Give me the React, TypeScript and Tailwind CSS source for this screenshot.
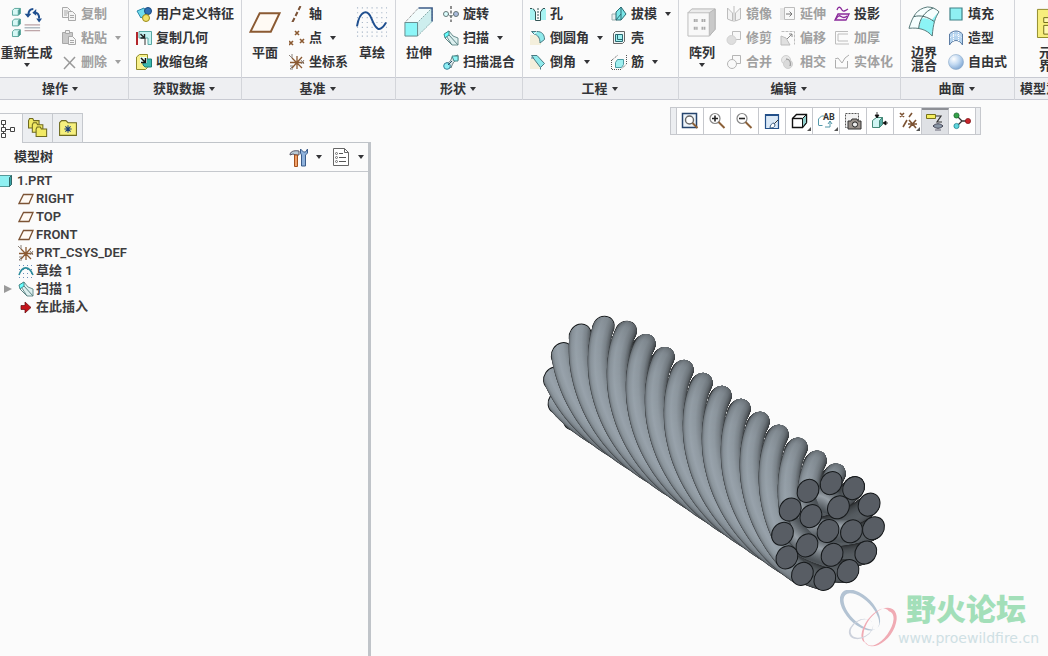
import React from 'react';
import clsx from 'clsx';

const ICONS: Record<string, React.ReactNode> = {
  regenerate: (
    <>
      {[2, 13, 24].map((y) => (
        <g key={y} stroke="#5aa59c" strokeWidth="1">
          <path d={`M1.5 ${y + 2.5}l2-2h6v5l-2 2h-6z`} fill="#d6f8f5" />
          <path d={`M7.5 ${y + 2.5}l2-2v5l-2 2z`} fill="#3f8f86" />
        </g>
      ))}
      <path d="M23 3c-4 0-5 3-5 6M25 7c3 0 4 3 4 6" fill="none" stroke="#1f4f8f" strokeWidth="2" />
      <path d="M14 8h7l-3.500 4zM22 7l4-4v7zM26 13h6l-3 4z" fill="#1f4f8f" />
      <path d="M14 19.500h16M14 25.500h16" stroke="#a98a8e" />
      <path d="M14 22.500h16" stroke="#8a9aa6" />
    </>
  ),
  copy: (
    <g fill="#f4f4f4" stroke="#a9a9a9">
      <path d="M1.500 1.500h5l3 3v7h-8z" />
      <path d="M3 5h4M3 7h4M3 9h3" />
      <path d="M7.500 5.500h4l3 3v6h-7z" />
      <path d="M9 9.500h4M9 11.500h4" />
    </g>
  ),
  paste: (
    <g stroke="#a8a8a8">
      <path d="M1.500 2.500h10v11h-10z" fill="#c9c9c9" />
      <path d="M4.500 .5h4v3h-4z" fill="#eee" />
      <path d="M7.500 6.500h4l3 3v5h-7z" fill="#f6f6f6" />
      <path d="M9 10.500h4M9 12.500h4" />
    </g>
  ),
  remove: <path d="M3 3l11 11M14 3L3 15" fill="none" stroke="#999" strokeWidth="1.500" />,
  udf: (
    <>
      <path d="M1 5l7-3 3 5-6 5z" fill="#6fdcec" stroke="#2b86a8" />
      <circle cx="12" cy="5" r="3.500" fill="#2f6fb4" stroke="#184a80" />
      <circle cx="10" cy="12" r="3.500" fill="#f1e26a" stroke="#9a8a1a" />
    </>
  ),
  copygeom: (
    <>
      <path d="M1 2v13" stroke="#b3262b" strokeWidth="2" />
      <path d="M3 1.500h12.500v13H12V8H3z" fill="#c5f3f1" stroke="#59a8a4" />
      <path d="M4.500 4l4 4M8.500 4v4h-4" stroke="#222" strokeWidth="1.400" fill="none" />
      <path d="M9 8v7" stroke="#333" />
    </>
  ),
  shrinkwrap: (
    <>
      <path d="M.5 3l3-2.500h8v13l-2 2h-9z" fill="#f7f08c" stroke="#8f8a2a" />
      <path d="M7 5h8.500v8H9l-2-2z" fill="#3bb9ae" stroke="#1e7e78" />
      <path d="M4 3h7v6H4z" fill="#e6ffff" />
      <path d="M5 4l4 4M9.500 4v4.500H5" stroke="#111" strokeWidth="1.500" fill="none" />
    </>
  ),
  plane: <path d="M11 7.500h20.500l-9 19H1.500z" fill="#fffaf4" stroke="#8b5a32" strokeWidth="2" />,
  axis: <path d="M11.500 0L9.500 4M8.500 6l-2 4M5.500 12l-2.500 5" stroke="#7a5236" strokeWidth="2" />,
  point: (
    <path
      d="M6 1l4 4M10 1L6 5M0 11l4 4M4 11l-4 4M11 9l4 4M15 9l-4 4"
      stroke="#8b5a32"
      strokeWidth="1.600"
    />
  ),
  csys: (
    <>
      <path d="M8 2v13M1 8.500h14M3 4l10 10M13 3L3 14" stroke="#8b5a32" strokeWidth="1.300" />
      <path d="M0 1l3 3M3 0v4M12 6l3 4M15 6l-3 4M1 12h3l-3 3h3" stroke="#8a8078" fill="none" />
    </>
  ),
  sketch: (
    <>
      {[2, 7, 12, 17, 22, 27, 31].map((y) => (
        <path key={y} d={`M1 ${y}h31`} stroke="#a9b8c9" strokeWidth="1.200" strokeDasharray="1.200 3.800" />
      ))}
      <path d="M1 21C4 4 12 3 16 13s8 16 15 4" fill="none" stroke="#1f4f8f" strokeWidth="2" />
    </>
  ),
  extrude: (
    <>
      <path d="M2 17L16 2h14v15L15 31V17z" fill="#f2fcfc" />
      <path d="M30 2v14L15 31V17z" fill="#cdeeee" stroke="#8aa" strokeDasharray="2 1" />
      <path d="M2 17L16 2" stroke="#777" strokeDasharray="1 1" />
      <path d="M2 17h13v14H2z" fill="#8cf6f8" stroke="#668a8c" />
      <path d="M16 2h14v14" fill="none" stroke="#3c5b88" strokeWidth="1.500" />
    </>
  ),
  revolve: (
    <>
      <path d="M8 0v16" stroke="#222" strokeDasharray="3 1.500" />
      <circle cx="3" cy="8" r="2.500" fill="#dff" stroke="#677" />
      <circle cx="13" cy="8" r="2.500" fill="#abd" stroke="#677" />
      <path d="M5 8c2 3 4 3 6 0" fill="none" stroke="#677" />
    </>
  ),
  sweep: (
    <>
      <path d="M2 4l4-3 4 5 5 2v7h-6z" fill="#dcefef" stroke="#6b9090" />
      <path d="M1 4l5-3v4L2 8z" fill="#6ff" stroke="#488" />
      <path d="M2 8l7 7M6 5l9 10" fill="none" stroke="#5b8484" />
    </>
  ),
  sweepblend: (
    <>
      <path d="M3 9c4 0 5-3 6-6l6-2v5c-3 0-5 2-7 8z" fill="#dbe6e8" stroke="#6a7f84" />
      <path d="M9 2h6v5h-4z" fill="#8ff5f7" stroke="#488" />
      <circle cx="4" cy="12" r="3.300" fill="#8feff5" stroke="#357f96" />
      <path d="M5 11l4-4" stroke="#26506a" />
    </>
  ),
  hole: (
    <>
      <path d="M0 3h4l2 3v8H0zM16 3h-4l-2 3v8h6z" fill="#a6f3f2" />
      <path d="M3 2.500L5.500 6v8.500h5V6L13 2.500" fill="none" stroke="#355" />
      <path d="M0 2.500h3M13 2.500h3M8 2v13" stroke="#355" strokeDasharray="2 1" />
    </>
  ),
  round: (
    <>
      <path d="M0 5h6l5 5v5H0z" fill="#f4efdc" />
      <path d="M1.500 1.500H7c5 0 7.500 3 7.500 8L10 13C10 8 8 5 4 4z" fill="#8feaec" stroke="#4a7a82" />
      <path d="M4 4l3-2.500" stroke="#fff" />
    </>
  ),
  chamfer: (
    <>
      <path d="M0 5h6l5 5v5H0z" fill="#f4efdc" />
      <path d="M1.500 1.500H7l7.500 8-4 4L4 5z" fill="#8feaec" stroke="#4a7a82" />
      <path d="M10.500 13.500v2M1 4h3" stroke="#4a7a82" />
    </>
  ),
  draft: (
    <>
      <path d="M1 8h5v6H1z" fill="#e8eeee" stroke="#9ab0b0" />
      <path d="M5 14V6l5-5 5 7-5 6z" fill="#7be6e8" stroke="#2a6a72" />
      <path d="M5 14l5-6V1M10 8v6" stroke="#2a6a72" fill="none" />
    </>
  ),
  shell: (
    <>
      <path d="M2.500 3.500l2-2h9v10l-2 2h-9z" fill="#eef6f6" stroke="#666" />
      <path d="M4.500 4.500h7v7h-7z" fill="#9ff0f0" stroke="#2a6a72" />
      <path d="M6.500 5v4.500H11" fill="none" stroke="#2a6a72" />
    </>
  ),
  rib: (
    <>
      <path d="M1 6l6-5M15.500 1v9l-5 5" stroke="#555" strokeDasharray="1 1" fill="none" />
      <path d="M4.500 8.500l2-3h6v5l-2 3h-6z" fill="#9feff0" stroke="#4a9aa2" />
      <path d="M.5 6v9.500h10" stroke="#555" strokeDasharray="1 1" fill="none" />
    </>
  ),
  pattern: (
    <>
      <path d="M2 7l4-4h24v21l-6 7z" fill="#ebebeb" stroke="#b5b5b5" />
      <path d="M24 7l6-4v21l-6 7z" fill="#c9c9c9" stroke="#b5b5b5" />
      <path d="M2 7h22v24H2z" fill="#f8f8f8" stroke="#bdbdbd" />
      <path d="M8 15h4M16 15h4M8 23h4M16 23h4" stroke="#aaa" strokeWidth="3" strokeDasharray="2 .5" />
    </>
  ),
  mirror: (
    <g fill="#f3f3f3" stroke="#bdbdbd">
      <path d="M1.500 2v11l5 2V7z" />
      <path d="M14.500 2v11l-5 2V7z" />
      <path d="M8 0v16" />
    </g>
  ),
  trim: (
    <g stroke="#bdbdbd">
      <path d="M6.500 1.500h8v8h-8z" fill="#f8f8f8" />
      <circle cx="5.500" cy="10" r="4.500" fill="#dedede" stroke="#d2d2d2" />
    </g>
  ),
  merge: (
    <g stroke="#b5b5b5" fill="#f9f9f9">
      <path d="M6.500 1.500h8v8h-8z" />
      <circle cx="6" cy="10" r="4.500" />
    </g>
  ),
  extend: (
    <g stroke="#bdbdbd">
      <path d="M0 2h4v12H0z" fill="#e6e6e6" stroke="none" />
      <path d="M4.500 1.500h10v12h-10z" fill="#f9f9f9" />
      <path d="M6 8h6M9.500 5.500L12 8l-2.500 2.500" fill="none" stroke="#777" />
    </g>
  ),
  offset: (
    <g stroke="#bdbdbd">
      <path d="M1.500 1.500h13v13" fill="none" strokeDasharray="3 1" />
      <path d="M1 6l5 2 4 7H1z" fill="#e0e0e0" />
      <path d="M7 9l5-5M9 4h3v3" fill="none" stroke="#888" />
    </g>
  ),
  intersect: (
    <g stroke="#d0d0d0">
      <circle cx="6" cy="6" r="4.500" fill="#e8e8e8" />
      <circle cx="8" cy="10" r="4.500" fill="#dadada" />
      <path d="M6 5c4 0 5 4 4 7" fill="none" stroke="#888" />
    </g>
  ),
  project: (
    <g fill="none" stroke="#8a2a9a" strokeWidth="1.300">
      <path d="M3 4c2-5 4-2 5 0s3 1 6-1" />
      <path d="M1 14l3-6h11l-3 6z" fill="#f9eefa" />
      <path d="M2 13c3-5 4-3 6-2s3 1 5-1" />
    </g>
  ),
  thicken: <path d="M14 1.500H1.500v12.500H15M14 4H4v7h10" fill="none" stroke="#bdbdbd" />,
  solidify: <path d="M1.500 6v8h12V7M1 5l3-1 4 5 3-5 4-3" fill="none" stroke="#adadad" />,
  boundary: (
    <>
      <path d="M1 23C5 10 9 3 20 1c5 0 9 2 12 5-4 6-6 12-7 25-6-7-14-9-24-8z" fill="#f6fefe" />
      <path d="M14 13c5-1 7 1 10 2 3-4 5-6 8-9-4 6-6 12-7 25-4-5-9-7-14-8z" fill="#8cf4f6" />
      <path d="M1 23C5 10 9 3 20 1c5 0 9 2 12 5-4 6-6 12-7 25-6-7-14-9-24-8z" fill="none" stroke="#577" />
      <path d="M6 11c7-2 14 0 21 5M11 23c1-10 6-17 15-21" fill="none" stroke="#466" />
    </>
  ),
  fill: <path d="M2 2h12v12H2z" fill="#8ff0f2" stroke="#3f8288" strokeWidth="1.200" />,
  style: (
    <>
      <path d="M1.500 4C5 0 11 0 14.500 4v11C11 9 5 9 1.500 15z" fill="#b4d3ee" stroke="#5d7da4" />
      <path d="M5.500 2v9M10.500 2v9M2 8c4-4 8-4 12 0" fill="none" stroke="#fff" strokeDasharray="1 1" />
    </>
  ),
  freestyle: <circle cx="8" cy="8" r="7.500" fill="url(#ball)" stroke="#8aa7c8" strokeWidth=".6" />,
  component: (
    <>
      <path d="M1.500 3.500h30v29h-30z" fill="#f7ee7c" stroke="#8f8a2a" />
      <path d="M8 12h6V8h6v9H8zM8 20h6v4h6v5H8z" fill="#fff9b0" stroke="#6f6a1a" />
    </>
  ),
  tree: (
    <g fill="#fff" stroke="#444">
      <path d="M3.500 5v9M6 9.500h5" />
      <path d="M1.500 .5h4v4h-4zM1.500 7.500h4v4h-4zM10.500 7.500h4v4h-4zM1.500 13.500h4v4h-4z" />
    </g>
  ),
  folders: (
    <g fill="#f1e964" stroke="#6e6a20">
      {[0, 4, 8].map((o) => (
        <path key={o} d={`M${0.5 + o * 0.9} ${2.5 + o}l1-2h3l1 2h5v7h-10z`} />
      ))}
    </g>
  ),
  favorite: (
    <>
      <path d="M1.500 4.500l2-2h4l2 2h8v12h-16z" fill="#f6f07e" stroke="#6e6a20" />
      <path d="M9.500 7v7M6 10.500h7M7 8l5 5M12 8l-5 5" stroke="#1c3f7a" />
    </>
  ),
  tools: (
    <>
      <path d="M1 7c0-3 3-5 9-4v4H7L4 6 1 7z" fill="#b9cbd8" stroke="#556" />
      <path d="M5.500 7h3v11.500h-3z" fill="#f0a06a" stroke="#a3501c" />
      <path d="M11.500 1v4l1 2v11h4V7l2-2V1l-2 3h-2z" fill="#8fb2dc" stroke="#3b5c8a" />
    </>
  ),
  list: (
    <>
      <path d="M1.500.5h11l4 4v13h-15z" fill="#fff" stroke="#666" />
      <path d="M12.500.5v4h4" fill="none" stroke="#666" />
      <path d="M7 5.500h4M7 9.500h7M7 13.500h7" stroke="#555" />
      <circle cx="4.500" cy="5.500" r="1" fill="none" stroke="#555" strokeWidth=".8" />
      <circle cx="4.500" cy="9.500" r="1" fill="none" stroke="#555" strokeWidth=".8" />
      <circle cx="4.500" cy="13.500" r="1" fill="none" stroke="#555" strokeWidth=".8" />
    </>
  ),
  part: (
    <>
      <path d="M-2 4.500l2-2h11.500v9l-2 2H-2z" fill="#8ff0f2" stroke="#599" />
      <path d="M9.500 4.500l2-2v9l-2 2z" fill="#39a4a8" stroke="#366" />
    </>
  ),
  datum: <path d="M5.500 3.500h9.500l-4 9H1z" fill="#fffaf4" stroke="#7c5334" strokeWidth="1.300" />,
  curve: (
    <>
      <path d="M1 2.500h14M1 6.500h14M1 10.500h14M1 14.500h14" stroke="#6b8fb8" strokeDasharray="1 3" />
      <path d="M1 12c3-9 10-10 14 0" fill="none" stroke="#2b8c9c" strokeWidth="1.600" />
    </>
  ),
  insert: <path d="M3 6.500h4V3l6 5.500L7 14v-3.500H3z" fill="#c4141b" stroke="#5e0a0d" strokeWidth=".7" />,
  refit: (
    <>
      <path d="M1.500 1.500h14v14h-14z" fill="#eef5fb" stroke="#26456e" strokeWidth="1.500" />
      <circle cx="8.500" cy="8" r="4" fill="#fff" stroke="#666" strokeWidth="1.400" />
      <path d="M11.500 11l5 5" stroke="#8b6038" strokeWidth="2" />
    </>
  ),
  zoomin: (
    <>
      <circle cx="7" cy="6.500" r="5" fill="#fff" stroke="#888" strokeWidth="1.200" />
      <path d="M4 6.500h6M7 3.500v6" stroke="#222" strokeWidth="1.600" />
      <path d="M10.500 10l6 6" stroke="#8b6038" strokeWidth="2" />
    </>
  ),
  zoomout: (
    <>
      <circle cx="7" cy="6.500" r="5" fill="#fff" stroke="#888" strokeWidth="1.200" />
      <path d="M4 6.500h6" stroke="#222" strokeWidth="1.600" />
      <path d="M10.500 10l6 6" stroke="#8b6038" strokeWidth="2" />
    </>
  ),
  repaint: (
    <>
      <path d="M2.500 2.500h13v14h-13z" fill="#dbe9f7" stroke="#23508a" strokeWidth="1.200" />
      <path d="M2 3h14" stroke="#23508a" strokeWidth="2" />
      <path d="M7 16c0-3 2-5 4-5l1 2c0 2-2 3-5 3z" fill="#fff" stroke="#3c5f86" />
      <path d="M11.500 11.500L15 8" stroke="#333" />
    </>
  ),
  display: (
    <>
      <path d="M2.500 6.500l4-4h10v8l-4 5h-10z" fill="#fff" stroke="#111" strokeWidth="1.400" />
      <path d="M12.500 6.500v9l4-5v-8z" fill="#8fcfcc" stroke="#111" />
      <path d="M2.500 6.500h10" stroke="#111" strokeWidth="1.400" />
    </>
  ),
  views: (
    <>
      <path d="M1.500 13V7l3-3h3M1.500 13.500h4M8 15h5V9M13 9l-2 3M13 9l2 3" fill="none" stroke="#59a" />
      <text x="6" y="8" fontSize="9" fontWeight="700" fill="#333">AB</text>
    </>
  ),
  camera: (
    <>
      <path d="M1.500 1.500h13v14h-13z" fill="#f3f3f3" stroke="#555" strokeDasharray="2 1" />
      <path d="M4 9h3l1-2h5l1 2h3v8H4z" fill="#9a928c" stroke="#333" />
      <circle cx="11" cy="12.500" r="2.600" fill="#eee" stroke="#222" />
    </>
  ),
  sections: (
    <>
      <path d="M1.500 8.500l4-3h6v7l-3 3h-7z" fill="#cff5f3" stroke="#487" />
      <path d="M8.500 8.500l3-3v7l-3 3z" fill="#5cb0aa" stroke="#487" />
      <path d="M6 0v5M4 3h4l-2 3zM17 11h-4M15 9v4l-3-2z" stroke="#111" fill="#111" strokeWidth=".8" />
    </>
  ),
  datums: (
    <path
      d="M1 1l4 4M5 1L1 5M13 1l-3 4M8 8l-4 7M10 8l7 8M17 8l-7 8M9 12h9"
      fill="none"
      stroke="#7c5334"
      strokeWidth="1.600"
    />
  ),
  annotations: (
    <>
      <path d="M.5 1.500h9v4h-9z" fill="#f5ee5e" stroke="#77711a" />
      <path d="M10 3h5l-4 6h5" fill="none" stroke="#333" strokeWidth="1.200" />
      <path d="M7 13c3-3 7-3 10 0-3 3-7 3-10 0z" fill="#8a97a6" stroke="#445" />
      <path d="M9 17h6" stroke="#667" />
    </>
  ),
  spin: (
    <>
      <path d="M4 4l5 5-5 5M9 9h6" fill="none" stroke="#333" strokeWidth="1.300" />
      <circle cx="3.500" cy="3.500" r="2.600" fill="#35a24a" stroke="#16612a" strokeWidth=".7" />
      <circle cx="3.500" cy="14" r="2.600" fill="#5fd6de" stroke="#177a84" strokeWidth=".7" />
      <circle cx="15" cy="9" r="2.600" fill="#c9252b" stroke="#7a1115" strokeWidth=".7" />
    </>
  ),
};

const Icon: React.FC<{ name: string; box?: number; className?: string }> = ({
  name,
  box = 16,
  className = 'w-4 h-4',
}) => (
  <svg viewBox={`0 0 ${box} ${box}`} className={clsx('shrink-0', className)} aria-hidden="true">
    {ICONS[name]}
  </svg>
);

const Caret: React.FC<{ className?: string }> = ({ className }) => (
  <svg viewBox="0 0 6 4" className={clsx('w-[6px] h-1 shrink-0 fill-current', className)} aria-hidden="true">
    <path d="M0 0h6L3 4z" />
  </svg>
);

type Command = { icon: string; label: string; menu?: boolean; off?: boolean };
type Big = { icon: string; lines: string[]; menu?: boolean; wide?: boolean };
type Group = { title: string; width: string; items: (Big | Command[])[] };

const groups: Group[] = [
  {
    title: '操作',
    width: 'w-[129px]',
    items: [
      { icon: 'regenerate', lines: ['重新生成'], menu: true, wide: true },
      [
        { icon: 'copy', label: '复制', off: true },
        { icon: 'paste', label: '粘贴', off: true, menu: true },
        { icon: 'remove', label: '删除', off: true, menu: true },
      ],
    ],
  },
  {
    title: '获取数据',
    width: 'w-[113px]',
    items: [
      [
        { icon: 'udf', label: '用户定义特征' },
        { icon: 'copygeom', label: '复制几何' },
        { icon: 'shrinkwrap', label: '收缩包络' },
      ],
    ],
  },
  {
    title: '基准',
    width: 'w-[154px]',
    items: [
      { icon: 'plane', lines: ['平面'] },
      [
        { icon: 'axis', label: '轴' },
        { icon: 'point', label: '点', menu: true },
        { icon: 'csys', label: '坐标系' },
      ],
      { icon: 'sketch', lines: ['草绘'] },
    ],
  },
  {
    title: '形状',
    width: 'w-[127px]',
    items: [
      { icon: 'extrude', lines: ['拉伸'] },
      [
        { icon: 'revolve', label: '旋转' },
        { icon: 'sweep', label: '扫描', menu: true },
        { icon: 'sweepblend', label: '扫描混合' },
      ],
    ],
  },
  {
    title: '工程',
    width: 'w-[156px]',
    items: [
      [
        { icon: 'hole', label: '孔' },
        { icon: 'round', label: '倒圆角', menu: true },
        { icon: 'chamfer', label: '倒角', menu: true },
      ],
      [
        { icon: 'draft', label: '拔模', menu: true },
        { icon: 'shell', label: '壳' },
        { icon: 'rib', label: '筋', menu: true },
      ],
    ],
  },
  {
    title: '编辑',
    width: 'w-[222px]',
    items: [
      { icon: 'pattern', lines: ['阵列'], menu: true },
      [
        { icon: 'mirror', label: '镜像', off: true },
        { icon: 'trim', label: '修剪', off: true },
        { icon: 'merge', label: '合并', off: true },
      ],
      [
        { icon: 'extend', label: '延伸', off: true },
        { icon: 'offset', label: '偏移', off: true },
        { icon: 'intersect', label: '相交', off: true },
      ],
      [
        { icon: 'project', label: '投影' },
        { icon: 'thicken', label: '加厚', off: true },
        { icon: 'solidify', label: '实体化', off: true },
      ],
    ],
  },
  {
    title: '曲面',
    width: 'w-[114px]',
    items: [
      { icon: 'boundary', lines: ['边界', '混合'] },
      [
        { icon: 'fill', label: '填充' },
        { icon: 'style', label: '造型' },
        { icon: 'freestyle', label: '自由式' },
      ],
    ],
  },
  {
    title: '模型意图',
    width: 'w-[76px]',
    items: [{ icon: 'component', lines: ['元件', '界面'] }],
  },
];

const BigButton: React.FC<{ item: Big }> = ({ item }) => (
  <button
    type="button"
    className={clsx('flex flex-col items-center shrink-0 pt-1 whitespace-nowrap', item.wide ? 'w-[53px]' : 'w-8')}
  >
    <Icon name={item.icon} box={33} className="w-8 h-8 mb-2" />
    {item.lines.map((line) => (
      <span key={line} className="leading-[13px]">
        {line}
      </span>
    ))}
    {item.menu && <Caret className="mt-1" />}
  </button>
);

const SmallButton: React.FC<{ item: Command }> = ({ item }) => (
  <button
    type="button"
    disabled={item.off}
    className={clsx('flex items-center h-6 whitespace-nowrap', item.off && 'text-[#a0a0a0]')}
  >
    <Icon name={item.icon} />
    <span className="ml-1">{item.label}</span>
    {item.menu && <Caret className="ml-2" />}
  </button>
);

const Ribbon: React.FC = () => (
  <header className="flex overflow-hidden">
    {groups.map((group, index) => {
      const first = index === 0;
      const last = index === groups.length - 1;
      return (
        <section
          key={group.title}
          className={clsx('flex flex-col shrink-0', group.width, last ? 'grow' : 'border-r border-[#d3d5da]')}
        >
          <div className={clsx('flex grow gap-2 pt-[2px] pb-[3px]', !first && !last && 'pl-[7px]', last && 'pl-[21px]')}>
            {group.items.map((item, i) =>
              Array.isArray(item) ? (
                <div key={i} className="flex flex-col">
                  {item.map((command) => (
                    <SmallButton key={command.label} item={command} />
                  ))}
                </div>
              ) : (
                <BigButton key={i} item={item} />
              ),
            )}
          </div>
          <button
            type="button"
            className={clsx(
              'flex items-center gap-1 h-[23px] border-y border-[#c8cad2] bg-[#eeeff2] whitespace-nowrap',
              last ? 'pl-[5px]' : 'justify-center',
              first ? 'pr-2' : 'pr-[2px]',
            )}
          >
            {group.title}
            <Caret />
          </button>
        </section>
      );
    })}
  </header>
);

const treeItems = [
  { icon: 'datum', label: 'RIGHT' },
  { icon: 'datum', label: 'TOP' },
  { icon: 'datum', label: 'FRONT' },
  { icon: 'csys', label: 'PRT_CSYS_DEF' },
  { icon: 'curve', label: '草绘 1' },
  { icon: 'sweep', label: '扫描 1', expandable: true },
  { icon: 'insert', label: '在此插入' },
];

const Navigator: React.FC = () => (
  <aside className="flex flex-col w-[371px] shrink-0 pt-[13px]">
    <div role="tablist" className="relative flex h-[30px] -mb-px">
      <button
        role="tab"
        aria-selected="true"
        aria-label="模型树"
        className="flex items-center w-[23px] border-t border-r border-[#c5c8cd] bg-[#fbfbfb]"
      >
        <Icon name="tree" box={18} className="w-[18px] h-[18px]" />
      </button>
      {['folders', 'favorite'].map((name) => (
        <button
          key={name}
          role="tab"
          aria-selected="false"
          aria-label={name}
          className="flex items-center justify-center w-[30px] border-y border-r border-[#c5c8cd] bg-[#eceef1]"
        >
          <Icon name={name} box={19} className="w-5 h-5" />
        </button>
      ))}
    </div>
    <div className="flex-1 border-t border-r-[3px] border-[#c0c4c9]">
      <div className="flex items-center h-[29px] pl-[14px] pr-1 border-b border-[#c5c8cd]">
        <h2 className="mr-auto">模型树</h2>
        <button type="button" aria-label="设置" className="flex items-center gap-2 mr-[10px]">
          <Icon name="tools" box={19} className="w-[19px] h-[19px]" />
          <Caret />
        </button>
        <button type="button" aria-label="显示" className="flex items-center gap-2">
          <Icon name="list" box={18} className="w-[18px] h-[18px]" />
          <Caret />
        </button>
      </div>
      <ul className="text-[#3d3d40]">
        <li className="flex items-center h-[18px]">
          <Icon name="part" />
          <span className="ml-px">1.PRT</span>
        </li>
        {treeItems.map((item) => (
          <li key={item.label} className="flex items-center h-[18px]">
            <span className="w-[18px] pl-1">
              {item.expandable && (
                <svg viewBox="0 0 8 8" className="w-2 h-2 fill-[#9a9a9a]" aria-hidden="true">
                  <path d="M0 0l8 4-8 4z" />
                </svg>
              )}
            </span>
            <Icon name={item.icon} />
            <span className="ml-[2px]">{item.label}</span>
          </li>
        ))}
      </ul>
    </div>
  </aside>
);

const viewTools = [
  { icon: 'refit' },
  { icon: 'zoomin' },
  { icon: 'zoomout' },
  { icon: 'repaint' },
  { icon: 'display', menu: true },
  { icon: 'views', menu: true },
  { icon: 'camera' },
  { icon: 'sections' },
  { icon: 'datums', menu: true },
  { icon: 'annotations', active: true },
  { icon: 'spin' },
];

const ViewToolbar: React.FC = () => (
  <div className="flex self-end h-7 mt-[7px] mr-[67px] border border-[#c6c8cd] bg-[#eceef1]">
    <div role="toolbar" className="grid grid-cols-11 w-[300px] ml-[5px] mr-1 bg-white border-l border-[#c6c8cd]">
      {viewTools.map((tool) => (
        <button
          key={tool.icon}
          type="button"
          aria-label={tool.icon}
          className={clsx(
            'relative flex items-center justify-center border-r border-[#c6c8cd]',
            tool.active && 'bg-[#dfe1e5] border-t-2 border-t-[#8e9096]',
          )}
        >
          <Icon name={tool.icon} box={18} className="w-[18px] h-[18px]" />
          {tool.menu && (
            <svg viewBox="0 0 4 4" className="absolute right-px bottom-[3px] w-1 h-1 fill-[#555]" aria-hidden="true">
              <path d="M4 0v4H0z" />
            </svg>
          )}
        </button>
      ))}
    </div>
  </div>
);

// Rope geometry: the axis runs along U on screen, N is the screen normal to it.
const TILT = 34.3;
const U = { x: 0.826, y: 0.563 };
const N = { x: 0.563, y: -0.826 };
const END = { x: 828, y: 531 };
const LENGTH = 276;
const SQUASH = 0.87;
const RAD = Math.PI / 180;

const place = (radius: number, angle: number, t: number) => {
  const a = radius * Math.cos(angle * RAD) * SQUASH - LENGTH * (1 - t);
  const b = radius * Math.sin(angle * RAD);
  return { x: END.x + U.x * a + N.x * b, y: END.y + U.y * a + N.y * b };
};

const lightAt = (angle: number) => {
  const table = [
    [0, 0.6], [70, 0.6], [92, 0.66], [105, 0.78], [120, 0.9], [150, 1], [190, 1.04], [240, 1.04], [270, 0.92], [300, 0.66], [361, 0.6],
  ];
  const i = table.findIndex((row) => row[0] > angle);
  const [a0, v0] = table[i - 1];
  const [a1, v1] = table[i];
  return v0 + ((v1 - v0) * (angle - a0)) / (a1 - a0);
};

const shade = (k: number) => `rgb(${Math.round(143 * k)},${Math.round(153 * k)},${Math.round(161 * k)})`;

const profile = [
  [0, 0.45], [0.05, 0.8], [0.15, 0.94], [0.35, 1.02], [0.6, 0.97], [0.8, 0.84], [0.93, 0.66], [1, 0.45],
];

// One gradient per degree, laid across the strand's direction of travel.
const gradients = Array.from({ length: 360 }, (_, angle) => {
  const du = LENGTH / (2 * Math.PI) - 50 * SQUASH * Math.sin(angle * RAD);
  const dn = 50 * Math.cos(angle * RAD);
  // near the crest the strand points at the viewer, so the direction is held steady there
  const steady = angle > 75 && angle < 92;
  const size = Math.hypot(du, dn);
  const pu = steady ? -1 : dn / size;
  const pv = steady ? 0 : du / size;
  const half = Math.hypot(10.4 * pu, 12 * pv);
  return { angle, x: pu * half, y: pv * half, light: lightAt(angle) };
});

type Slice = { x: number; y: number; near: number; fill: string; first: boolean };

const slices: Slice[] = [];
for (let strand = 0; strand < 12; strand++) {
  for (let turn = 0; turn <= 360; turn++) {
    const angle = (124 + strand * 30 + turn) % 360;
    const hidden = angle < 70 || angle > 320;
    if (hidden && turn > 20 && turn < 280) continue;
    const t = turn / 360;
    slices.push({
      ...place(50, angle, t),
      near: LENGTH * t * 1.73 - 25 * Math.cos(angle * RAD),
      fill: `url(#tube-${angle})`,
      first: turn === 0,
    });
  }
}
for (let strand = 0; strand < 5; strand++) {
  for (let turn = 300; turn <= 360; turn += 2) {
    const angle = (30 + strand * 72 + turn) % 360;
    slices.push({
      ...place(26, angle, turn / 360),
      near: (LENGTH * turn * 1.73) / 360 - 13 * Math.cos(angle * RAD),
      fill: 'url(#tube-inner)',
      first: false,
    });
  }
}
slices.sort((a, b) => a.near - b.near);

const caps = [
  ...Array.from({ length: 12 }, (_, i) => place(50, 124 + i * 30, 1)),
  ...Array.from({ length: 5 }, (_, i) => place(26, 30 + i * 72, 1)),
  place(0, 0, 1),
];

const RopeModel: React.FC = () => (
  <svg viewBox="371 135 677 521" className="w-full" role="img" aria-label="1.PRT">
    <defs>
      {gradients.map((g) => (
        <linearGradient
          key={g.angle}
          id={`tube-${g.angle}`}
          gradientUnits="userSpaceOnUse"
          x1={g.x}
          y1={g.y}
          x2={-g.x}
          y2={-g.y}
        >
          {profile.map(([offset, k]) => (
            <stop key={offset} offset={offset} stopColor={shade(k * g.light)} />
          ))}
        </linearGradient>
      ))}
      <linearGradient id="tube-inner" gradientUnits="userSpaceOnUse" x1="0" y1="12" x2="0" y2="-12">
        <stop offset="0" stopColor="#4a5055" />
        <stop offset=".5" stopColor="#979fa6" />
        <stop offset="1" stopColor="#4a5055" />
      </linearGradient>
    </defs>
    {slices.map((s, i) => (
      <ellipse
        key={i}
        rx="10.4"
        ry="12"
        transform={`translate(${s.x.toFixed(1)} ${s.y.toFixed(1)}) rotate(${TILT})`}
        fill={s.fill}
        stroke={s.first ? '#15181a' : undefined}
      />
    ))}
    {caps.map((c, i) => (
      <ellipse
        key={i}
        rx="10.4"
        ry="12"
        transform={`translate(${c.x.toFixed(1)} ${c.y.toFixed(1)}) rotate(${TILT})`}
        fill="#585d64"
        stroke="#15181a"
      />
    ))}
  </svg>
);

const Watermark: React.FC = () => (
  <div className="absolute right-[9px] bottom-2 flex items-end">
    <svg viewBox="0 0 58 58" className="w-[58px] h-[58px]" fillRule="evenodd" aria-hidden="true">
      <path
        transform="translate(20 20) rotate(46)"
        d="M-25 0a25 14 0 1 0 50 0a25 14 0 1 0-50 0zM-21 0a23 11 0 1 0 46 0a23 11 0 1 0-46 0z"
        fill="#b3c3d3"
      />
      <path
        transform="translate(40 37) rotate(-54)"
        d="M-22 0a22 13 0 1 0 44 0a22 13 0 1 0-44 0zM-21-2a20 10 0 1 0 39 0a20 10 0 1 0-39 0z"
        fill="#f0abb4"
      />
      <path
        transform="translate(21 39) rotate(-30)"
        d="M-13 0a13 9 0 1 0 26 0a13 9 0 1 0-26 0zM-11 0a12 8 0 1 0 24 0a12 8 0 1 0-24 0z"
        fill="#cdd2dc"
      />
    </svg>
    <div className="flex flex-col items-start">
      <strong className="pl-2 text-[30px] leading-9 text-[#a3dfb9]">野火论坛</strong>
      <span className="font-['DejaVu_Sans'] font-normal text-sm leading-5 text-[#cfe0e4]">www.proewildfire.cn</span>
    </div>
  </div>
);

const App: React.FC = () => {
  return (
    <div className="flex flex-col min-h-screen overflow-hidden bg-[#fbfbfb] font-[Roboto,'Noto_Sans_CJK_SC',sans-serif] text-[13px] leading-[18px] font-semibold text-[#333437]">
      <svg className="absolute w-0 h-0" aria-hidden="true">
        <defs>
          <radialGradient id="ball" cx=".35" cy=".3" r=".75">
            <stop offset="0" stopColor="#fff" />
            <stop offset=".5" stopColor="#c3daf2" />
            <stop offset="1" stopColor="#7fa6d2" />
          </radialGradient>
        </defs>
      </svg>
      <Ribbon />
      <div className="flex flex-1">
        <Navigator />
        <main className="relative flex flex-col flex-1 min-w-0">
          <ViewToolbar />
          <RopeModel />
          <Watermark />
        </main>
      </div>
    </div>
  );
};

export default App;
